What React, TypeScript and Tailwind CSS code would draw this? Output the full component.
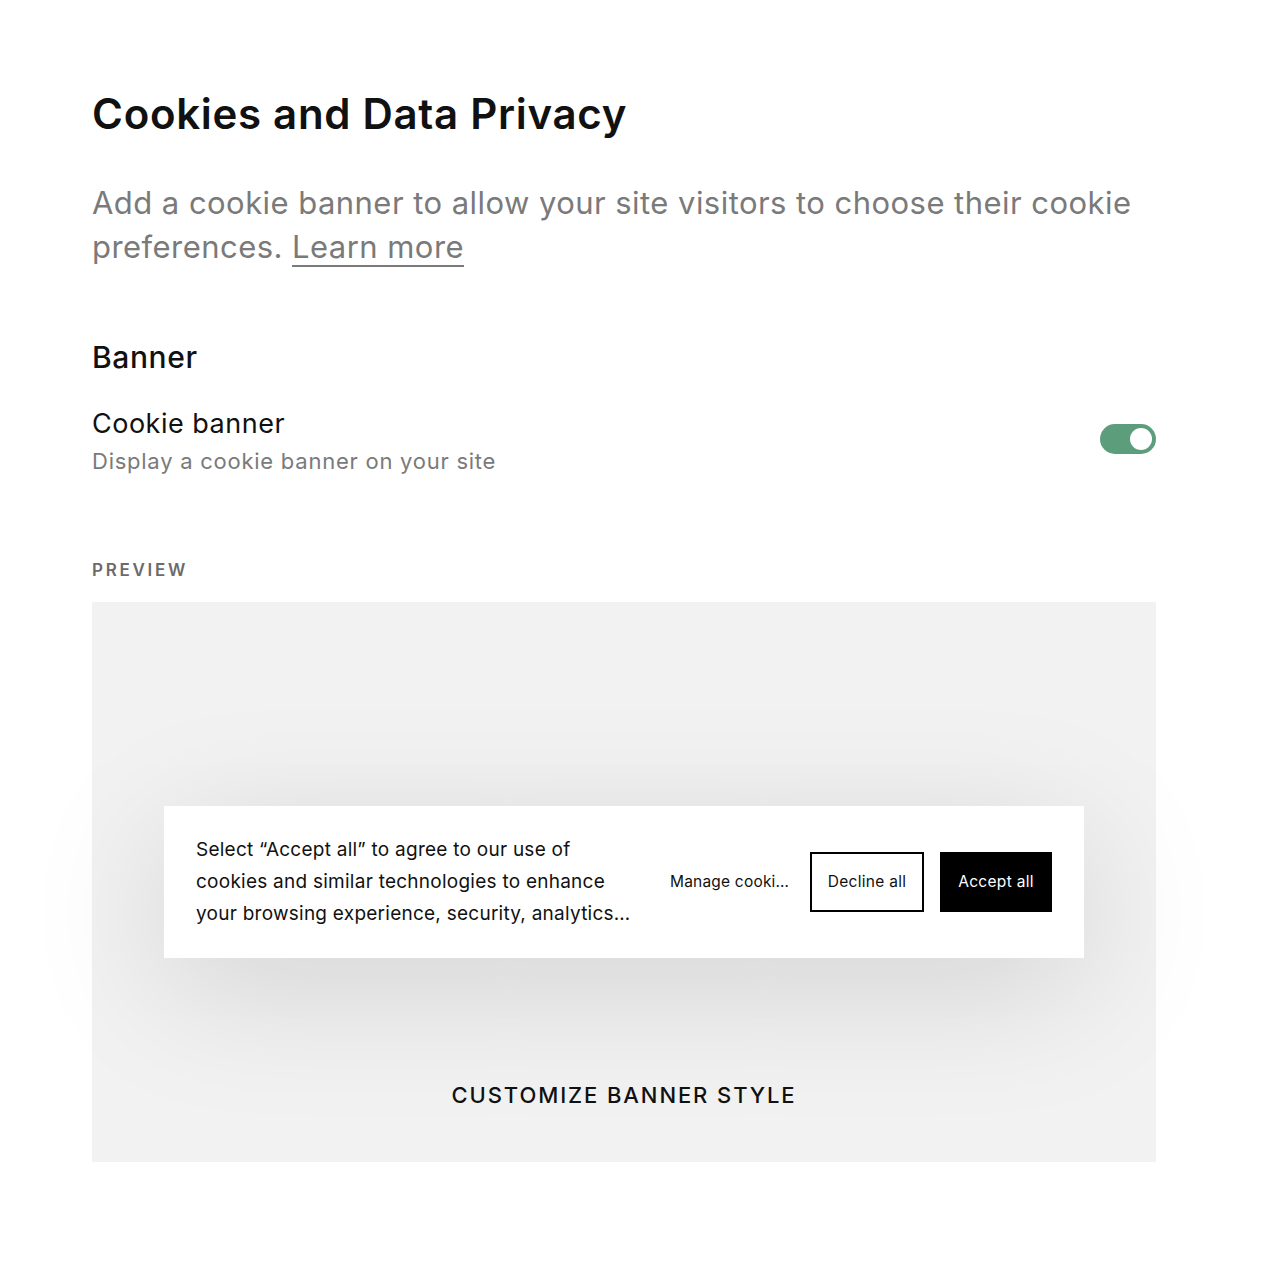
import React from 'react';

const Toggle: React.FC<{ on: boolean }> = ({ on }) => (
  <button
    type="button"
    aria-pressed={on}
    className="relative flex h-[30px] w-[56px] items-center rounded-full bg-[#5c9e7b] px-[4px]"
  >
    <span className={`block h-[22px] w-[22px] rounded-full bg-white ${on ? 'ml-auto' : ''}`} />
  </button>
);

const BannerPreview: React.FC = () => (
  <div className="flex h-[152px] w-[920px] items-center justify-between bg-white px-8 shadow-[0_30px_140px_rgba(0,0,0,0.13)]">
    <p className="whitespace-nowrap text-[19px] leading-[32px] tracking-[0.25px] text-[#111]">
      Select “Accept all” to agree to our use of
      <br />
      cookies and similar technologies to enhance
      <br />
      your browsing experience, security, analytics…
    </p>
    <div className="flex items-center">
      <span className="w-[120px] truncate text-[15.5px] tracking-[0.2px] text-[#111]">Manage cookies</span>
      <button className="ml-[20px] h-[60px] w-[114px] border-2 border-black bg-white text-[15.5px] tracking-[0.3px] text-[#111]">
        Decline all
      </button>
      <button className="ml-[16px] h-[60px] w-[112px] bg-black text-[15.5px] tracking-[0.3px] text-white">
        Accept all
      </button>
    </div>
  </div>
);

export default function App() {
  return (
    <div className="min-h-[1264px] w-full bg-white font-['Inter',sans-serif]">
      <div className="ml-[92px] w-[1064px] pt-[86px]">
        <h1 className="text-[42px] font-semibold leading-[56px] tracking-[0.7px] text-[#111]">
          Cookies and Data Privacy
        </h1>
        <p className="mt-[39px] text-[31px] leading-[44px] tracking-[0.45px] text-[#7a7a7a]">
          Add a cookie banner to allow your site visitors to choose their cookie preferences.{' '}
          <a className="underline decoration-[2px] underline-offset-[7px]">Learn more</a>
        </p>

        <h2 className="mt-[68px] text-[30px] font-medium leading-[40px] tracking-[0.6px] text-[#111]">Banner</h2>
        <div className="mt-[30px] flex items-center justify-between">
          <div>
            <div className="text-[27px] leading-[34px] tracking-[0.5px] text-[#111]">Cookie banner</div>
            <div className="mt-[5px] text-[22px] leading-[30px] tracking-[0.75px] text-[#7a7a7a]">
              Display a cookie banner on your site
            </div>
          </div>
          <div className="-mt-[6px]">
            <Toggle on />
          </div>
        </div>

        <div className="mt-[83px] text-[17px] font-semibold leading-[22px] tracking-[2.7px] text-[#6b6b6b]">PREVIEW</div>
        <div className="mt-[21px] flex h-[560px] flex-col items-center bg-[#f2f2f2] pt-[204px]">
          <BannerPreview />
          <div className="mt-[122px] text-[22px] font-medium leading-[30px] tracking-[1.9px] text-[#111]">
            CUSTOMIZE BANNER STYLE
          </div>
        </div>
      </div>
    </div>
  );
}
